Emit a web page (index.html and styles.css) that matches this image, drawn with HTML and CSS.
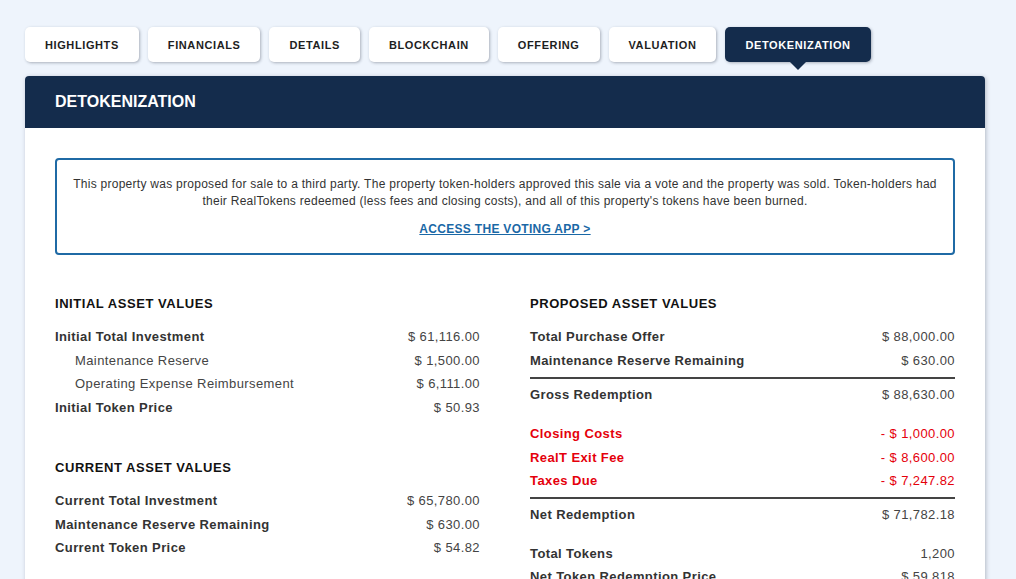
FILE: index.html
```html
<!DOCTYPE html>
<html>
<head>
<meta charset="utf-8">
<link rel="stylesheet" href="styles.css">
</head>
<body>
<div class="page">
  <nav class="tabs">
    <div class="tab">HIGHLIGHTS</div>
    <div class="tab">FINANCIALS</div>
    <div class="tab">DETAILS</div>
    <div class="tab">BLOCKCHAIN</div>
    <div class="tab">OFFERING</div>
    <div class="tab">VALUATION</div>
    <div class="tab active">DETOKENIZATION</div>
  </nav>
  <section class="card">
    <header class="card-head">DETOKENIZATION</header>
    <div class="card-body">
      <div class="notice">
        <p>This property was proposed for sale to a third party. The property token-holders approved this sale via a vote and the property was sold. Token-holders had their RealTokens redeemed (less fees and closing costs), and all of this property's tokens have been burned.</p>
        <a class="notice-link" href="#">ACCESS THE VOTING APP &gt;</a>
      </div>
      <div class="cols">
        <div class="col">
          <h3 class="sec-title">INITIAL ASSET VALUES</h3>
          <div class="row"><span class="lbl">Initial Total Investment</span><span class="val">$ 61,116.00</span></div>
          <div class="row sub"><span class="lbl">Maintenance Reserve</span><span class="val">$ 1,500.00</span></div>
          <div class="row sub"><span class="lbl">Operating Expense Reimbursement</span><span class="val">$ 6,111.00</span></div>
          <div class="row"><span class="lbl">Initial Token Price</span><span class="val">$ 50.93</span></div>
          <h3 class="sec-title second">CURRENT ASSET VALUES</h3>
          <div class="row"><span class="lbl">Current Total Investment</span><span class="val">$ 65,780.00</span></div>
          <div class="row"><span class="lbl">Maintenance Reserve Remaining</span><span class="val">$ 630.00</span></div>
          <div class="row"><span class="lbl">Current Token Price</span><span class="val">$ 54.82</span></div>
        </div>
        <div class="col">
          <h3 class="sec-title">PROPOSED ASSET VALUES</h3>
          <div class="row"><span class="lbl">Total Purchase Offer</span><span class="val">$ 88,000.00</span></div>
          <div class="row"><span class="lbl">Maintenance Reserve Remaining</span><span class="val">$ 630.00</span></div>
          <div class="divider"></div>
          <div class="row"><span class="lbl">Gross Redemption</span><span class="val">$ 88,630.00</span></div>
          <div class="group">
            <div class="row neg"><span class="lbl">Closing Costs</span><span class="val">- $ 1,000.00</span></div>
            <div class="row neg"><span class="lbl">RealT Exit Fee</span><span class="val">- $ 8,600.00</span></div>
            <div class="row neg"><span class="lbl">Taxes Due</span><span class="val">- $ 7,247.82</span></div>
          </div>
          <div class="divider"></div>
          <div class="row"><span class="lbl">Net Redemption</span><span class="val">$ 71,782.18</span></div>
          <div class="group">
            <div class="row"><span class="lbl">Total Tokens</span><span class="val">1,200</span></div>
            <div class="row"><span class="lbl">Net Token Redemption Price</span><span class="val">$ 59.818</span></div>
          </div>
        </div>
      </div>
    </div>
  </section>
</div>
</body>
</html>
```

FILE: styles.css
```css
* { box-sizing: border-box; }
html, body {
  margin: 0;
  padding: 0;
  background: #eef4fc;
  font-family: "Liberation Sans", Arial, sans-serif;
  color: #333;
  overflow: hidden;
}
.page {
  padding: 27px 31px 0 25px;
}
.tabs {
  display: flex;
  gap: 9px;
}
.tab {
  position: relative;
  height: 35px;
  padding: 0 20px;
  display: flex;
  align-items: center;
  background: #fff;
  border-radius: 5px;
  box-shadow: 1px 1px 3px rgba(40, 50, 70, 0.35);
  font-size: 11px;
  font-weight: bold;
  letter-spacing: 0.6px;
  color: #1e1e1e;
}
.tab.active {
  background: #142c4c;
  color: #fff;
}
.tab.active::after {
  content: "";
  position: absolute;
  left: 50%;
  bottom: -8px;
  margin-left: -8px;
  border-left: 8px solid transparent;
  border-right: 8px solid transparent;
  border-top: 8px solid #142c4c;
}
.card {
  margin-top: 14px;
  background: #fff;
  border-radius: 4px 4px 0 0;
  box-shadow: 1px 1px 4px rgba(40, 50, 70, 0.3);
  width: 960px;
}
.card-head {
  height: 52px;
  background: #142c4c;
  border-radius: 4px 4px 0 0;
  color: #fff;
  font-weight: bold;
  font-size: 16px;
  padding: 0 30px;
  display: flex;
  align-items: center;
}
.card-body {
  padding: 30px 30px 0 30px;
}
.notice {
  border: 2px solid #1f6aa5;
  border-radius: 4px;
  padding: 16px 12px 15px;
  text-align: center;
}
.notice p {
  margin: 0;
  font-size: 12px;
  line-height: 17px;
  letter-spacing: 0.27px;
  color: #333;
}
.notice-link {
  display: inline-block;
  margin-top: 11px;
  font-size: 12px;
  line-height: 17px;
  font-weight: bold;
  letter-spacing: 0.3px;
  color: #1a68a6;
  text-decoration: underline;
}
.cols {
  display: flex;
  gap: 50px;
  margin-top: 41px;
}
.col {
  flex: 1;
}
.sec-title {
  margin: 0 0 13px;
  font-size: 13px;
  line-height: 16px;
  font-weight: bold;
  color: #111;
  letter-spacing: 0.55px;
}
.sec-title.second {
  margin-top: 41px;
}
.row {
  display: flex;
  justify-content: space-between;
  font-size: 13px;
  line-height: 23.5px;
  letter-spacing: 0.4px;
}
.lbl {
  font-weight: bold;
  color: #333;
}
.val {
  color: #444;
}
.row.sub .lbl {
  font-weight: normal;
  padding-left: 20px;
  color: #444;
}
.row.neg .lbl, .row.neg .val {
  color: #e5000b;
}
.divider {
  height: 2px;
  background: #444;
  margin: 5px 0 4px;
}
.group {
  margin-top: 15.5px;
}
.group + .divider {
  margin-top: 4px;
  margin-bottom: 4px;
}
```
